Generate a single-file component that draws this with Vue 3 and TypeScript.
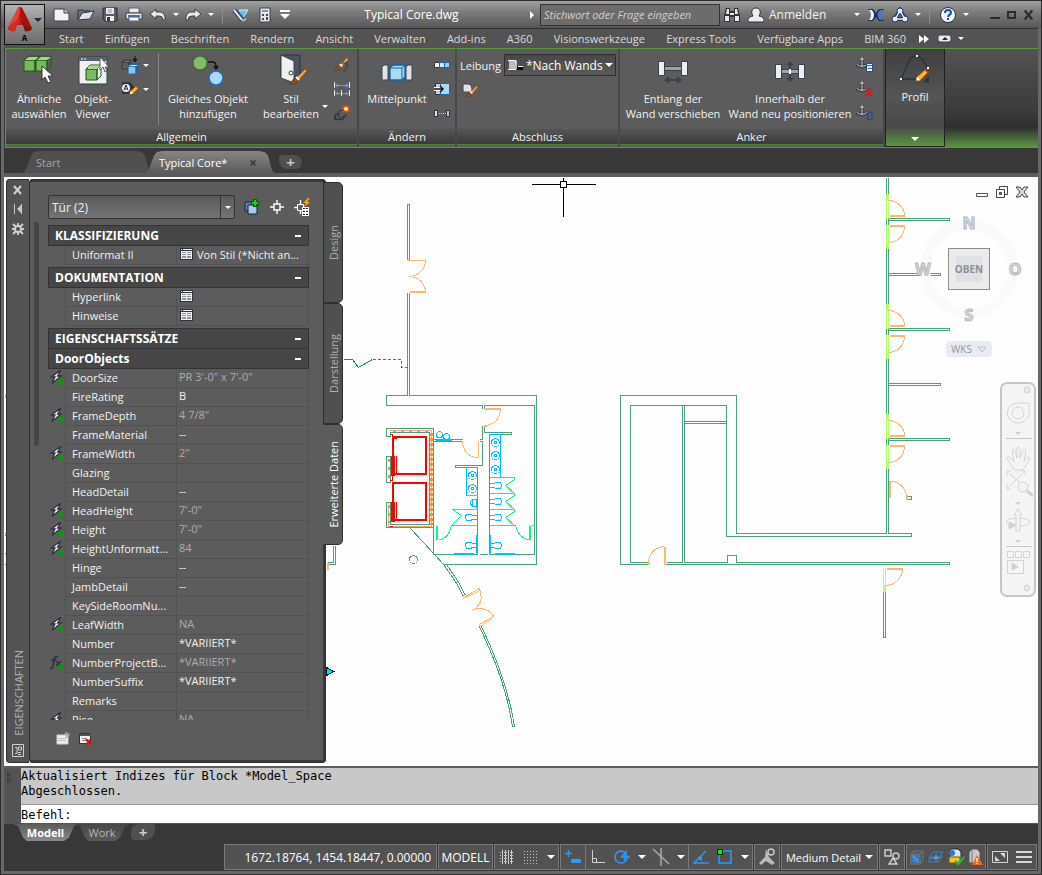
<script setup lang="ts">
import { h, ref } from 'vue'

type Icon = [number, number, string]

const cube = (x: number, y: number, s: number, d: number, top: string, front: string, line: string) =>
  `<path d="M${x} ${y + d}h${s}v${s}h-${s}z" fill="${front}" stroke="${line}"/><path d="M${x} ${y + d}l${d}-${d}h${s}v${s}l-${d} ${d}v-${s}l${d}-${d}M${x + s} ${y + d}h-${s}" fill="none" stroke="${line}"/><path d="M${x + 1} ${y + d}l${d}-${d - 1}h${s - 1}l-${d} ${d - 1}z" fill="${top}"/>`
const anchor =
  '<path d="M6 1v10M4 3h4M1 8c1 3 9 3 10 0M1 8v2M11 8v2" fill="none" stroke="#2f3540" stroke-width="3"/><path d="M6 1v10M4 3h4M1 8c1 3 9 3 10 0" fill="none" stroke="#d4d8df"/>'
const pencil =
  '<path d="M1 12l1-4 8-7 3 3-8 8z" fill="#ffb52e" stroke="#7c4a10"/><path d="M1 12l1-4 3 4z" fill="#fff"/><path d="M9 2l1-1 3 3-1 1z" fill="#a34a1c"/>'
const brush =
  '<path d="M16 1l-8 8 2 3 8-9z" fill="#f3a447" stroke="#8a4a14"/><path d="M8 8l3 3-2 2-3-3z" fill="#e8e8e8"/><path d="M6 10l3 3c0 3-5 4-9 3 3-1 3-5 6-6z" fill="#8d4c1c" stroke="#5c2f10" stroke-width=".6"/>'
const bolt = '<path d="M9.500 1L1.500 7h3.500l-3 6.500 9-7.500H7.500l3-5z" fill="#f4f5f7" stroke="#2d333e" stroke-width="1.3"/>'
const plus = '<path d="M11 8.500v6M8 11.500h6" stroke="#0b9a0b" stroke-width="2.4"/>'

const icons: Record<string, Icon> = {
  logo: [24, 26, '<path d="M10 1q2-2 4 0l10 20q-1 4-7 3l-2-6H9l-2 6q-6 1-7-3z" fill="#c01818"/><path d="M10 1q1-1 2-1 0 7-2 12l-6 6-4 3z" fill="#e2453a"/><path d="M14 1l10 20q-7-2-11-8l-1-13q1 0 2 1z" fill="#a81212"/><path d="M0 21q6-8 14-9l-5 6-2 6q-6 1-7-3z" fill="#cf2a24"/><path d="M13 13q4 6 11 8-1 4-7 3l-2-6z" fill="#8e0e0e"/>'],
  new: [18, 16, '<path d="M1 2h10l5 4v8H1z" fill="#f1f3f5" stroke="#3a3f47"/><path d="M11 2v4h5" fill="#c9ced6" stroke="#3a3f47"/>'],
  open: [18, 16, '<path d="M1 13V3h5l1 1h6v3" fill="#6c727c" stroke="#2f343c"/><path d="M1 13l4-7 12-2-4 8z" fill="#dfe2e8" stroke="#2f343c"/>'],
  save: [16, 16, '<path d="M1 1h14v13H3l-2-2z" fill="#56606e" stroke="#262b33"/><path d="M4 1h8v6H4z" fill="#e5e8ec"/><path d="M6 3h4M6 5h4" stroke="#8b93a0"/><path d="M4 9h8v5H4z" fill="#eef0f2"/><path d="M5 10h3v4H5z" fill="#333a45"/>'],
  print: [18, 16, '<path d="M4 1h10v5H4z" fill="#e9ecf0" stroke="#5a6069"/><path d="M1 6h16v6H1z" fill="#e8eaee" stroke="#3b414b"/><path d="M3 9h12" stroke="#3d75b8" stroke-width="2"/><path d="M4 10h10v4H4z" fill="#f7f8fa" stroke="#5a6069"/>'],
  undo: [18, 14, '<path d="M1 6l6-5v3h5q4 1 4 5v3h-2q0-4-4-4H7v3z" fill="#e6e9ee" stroke="#3a3f47"/>'],
  redo: [18, 14, '<path d="M17 6l-6-5v3H6q-4 1-4 5v3h2q0-4 4-4h3v3z" fill="#e6e9ee" stroke="#3a3f47"/>'],
  nav: [18, 16, '<path d="M7 3h9l-5 8z" fill="#5fc2ee" stroke="#dce9f3"/><path d="M2 3l9 11" stroke="#3a4350" stroke-width="4"/><path d="M2 3l8 10" stroke="#eef2f6" stroke-width="2"/><path d="M5 3l8 10" stroke="#2e5f93" stroke-width="1.5"/><path d="M10 14l4-2" stroke="#9fb6cc" stroke-width="2"/>'],
  sheet: [12, 16, '<path d="M1 1h10v14H1z" fill="#e4e7eb" stroke="#3c424c"/><path d="M3 3h6v2H3z" fill="#8b93a0"/><path d="M3 7h2v2H3zM7 7h2v2H7zM3 11h2v2H3zM7 10h2v3H7z" fill="#3f4752"/>'],
  cust: [10, 10, '<path d="M0 1h10" stroke="#fff" stroke-width="2"/><path d="M0 4h10L5 9z" fill="#fff"/>'],
  bino: [16, 16, '<path d="M2 1h4v3h4V1h4l2 8v6h-6v-5H6v5H0V9z" fill="#2d323b"/><path d="M3 2h2v5H2zM11 2h2l1 5h-3zM1 9h4v5H1zM11 9h4v5h-4zM6 6h4v2H6z" fill="#e6e9ee"/>'],
  user: [16, 16, '<path d="M8 1c5 0 5 5 3 8 4 1 5 2 5 6H0c0-4 1-5 5-6-2-3-2-8 3-8z" fill="#eceef1" stroke="#262b33"/>'],
  exch: [16, 14, '<path d="M0 1h5l3 4 3-4h5l-5 6 5 6h-5l-3-4-3 4H0l5-6z" fill="#1c2d59"/><path d="M1 2h3q4 5 0 10H1q4-5 0-10z" fill="#eef1f6"/><path d="M15 2h-3q-5 5 0 10h3q-4-5 0-10z" fill="#4f76c4"/>'],
  a360: [18, 16, '<path d="M9 3l5 9H4z" fill="none" stroke="#1f3566" stroke-width="4"/><g fill="#e8edf6" stroke="#22396b"><circle cx="9" cy="4" r="3"/><circle cx="4" cy="12" r="3"/><circle cx="14" cy="12" r="3"/></g><path d="M5 12h8M8 5l-3 6M10 5l3 6" stroke="#e8edf6" stroke-width="1.4"/>'],
  help: [18, 18, '<circle cx="9" cy="9" r="7.500" fill="#f4f6f8" stroke="#2b3038"/><path d="M6 7q0-3 3-3t3 3q0 1-2 2l-1 2" fill="none" stroke="#1748a8" stroke-width="2"/><path d="M8 12h2v2H8z" fill="#1748a8"/>'],
  min: [12, 12, '<path d="M1 9h10" stroke="#2b2b2b" stroke-width="2"/>'],
  max: [10, 12, '<path d="M1 3h7v6H1z" fill="none" stroke="#2b2b2b" stroke-width="2"/>'],
  close: [12, 12, '<path d="M2 2l7 8M9 2l-7 8" stroke="#2b2b2b" stroke-width="2"/><path d="M1 2h3M7 2h3M1 10h3M7 10h3" stroke="#2b2b2b"/>'],
  fwd: [10, 8, '<path d="M0 0l5 4-5 4zM5 0l5 4-5 4z" fill="#fff"/>'],
  panelUp: [14, 9, '<rect x="0" y="1" width="13" height="7" rx="2" fill="#e7e9ec" stroke="#3a3f47"/><path d="M4 6l3-3 3 3z" fill="#23272e"/>'],
  similar: [32, 34, cube(1, 3, 11, 4, '#a8d68f', '#79b65d', '#1e5c13') + cube(13, 3, 11, 4, '#a8d68f', '#79b65d', '#1e5c13') + '<path d="M19 13v14l3-3 3 6 3-1-3-6h5z" fill="#fff" stroke="#333"/>'],
  viewer: [32, 34, '<path d="M2 4h28v27H2z" fill="#eef0f4" stroke="#343a45"/><path d="M2 4h28v4H2z" fill="#59616f"/><path d="M4 6h2M7 6h2" stroke="#fff"/>' + cube(9, 12, 11, 4, '#a8d68f', '#7fb868', '#1e5c13') + '<path d="M23 4v13l3-3 2 5 2-1-2-4h4z" fill="#fff" stroke="#555"/>'],
  dup: [18, 18, cube(1, 4, 7, 2, '#777', '#5e5e5e', '#30353e') + cube(7, 8, 8, 2, '#d3ecff', '#8cc8ee', '#1463b0') + '<path d="M14 0v4M12 3h4l-2 3z" stroke="#15181d" fill="#15181d"/>'],
  tag: [18, 18, '<path d="M1 2h8l5 6-5 6H1z" fill="#30353e"/><circle cx="5" cy="8" r="4" fill="#f4f4f4"/><path d="M3 10l2-5 2 5M4 9h2" stroke="#222" fill="none"/><g transform="translate(8 5) scale(.75)">' + pencil + '</g>'],
  addSel: [34, 34, '<circle cx="9" cy="10" r="7" fill="#86bb6d" stroke="#2b6a1d"/><path d="M17 9h5q3 0 3 5" stroke="#111" fill="none" stroke-width="1.5"/><path d="M22 13h6l-3 4z" fill="#111"/><circle cx="25" cy="25" r="7" fill="#abd9f4" stroke="#1d6fb8" stroke-width="1.5"/>'],
  style: [32, 34, '<path d="M6 2h19v22H6z" fill="#4b5363" stroke="#2b303a"/><path d="M6 2l13 6v22L6 25z" fill="#eef0f3" stroke="#3a404b"/><circle cx="16" cy="20" r="2" fill="#fff" stroke="#333"/><g transform="translate(14 15)">' + brush + '</g>'],
  brushS: [18, 18, '<g transform="translate(1 1) scale(.8)">' + brush + '</g><path d="M16 7l-7 8 3 1 4-6z" fill="#4a4f57"/><path d="M9 7h5v3" stroke="#3a3f47" fill="none"/>'],
  dims: [18, 18, '<path d="M1.500 2v6M16.500 2v6M1.500 10v6M8.500 10v6M16.500 10v6" stroke="#e8e8e8"/><path d="M2 5.500h14M2 13.500h6M9 13.500h7" stroke="#6a9be8"/><path d="M2 5.500l3-2v4zM16 5.500l-3-2v4zM3 13.500l2-2v4zM15 13.500l-2-2v4z" fill="#6a9be8"/>'],
  star: [18, 18, '<path d="M2 16v-5q2 0 4-2M2 15q9 2 9-3" fill="none" stroke="#30353e" stroke-width="1.6"/><circle cx="9" cy="10" r="4" fill="none" stroke="#30353e"/><path d="M13 1v8M9 5h8M10 2l6 6M16 2l-6 6" stroke="#f0502a" stroke-width="1.5"/><circle cx="13" cy="5" r="2" fill="#fff45e"/>'],
  center: [34, 34, '<path d="M2 14l2-2h4v15H2zM26 14l2-2h4v15h-6z" fill="#dfe2e9" stroke="#3b424e"/><path d="M10 15l3-3h12v12l-3 3H10z" fill="#a9daf2" stroke="#0f66ab" stroke-width="1.4"/><path d="M10 15h12v12M22 15l3-3" stroke="#0f66ab" fill="none"/>'],
  row3: [18, 18, '<path d="M1.500 6.500h5v5h-5z" fill="#fff" stroke="#30353e"/><path d="M6.500 6.500h5v5h-5z" fill="#cde9fa" stroke="#1767b0"/><path d="M11.500 6.500h5v5h-5z" fill="#9bd2f2" stroke="#1767b0"/>'],
  insert: [18, 18, '<path d="M2.500 3.500h5v11h-5z" fill="#ccd0d6" stroke="#30353e"/><path d="M7.500 3.500h9v11h-9z" fill="#a9daf2" stroke="#1767b0"/><path d="M1 9h9" stroke="#fff" stroke-width="4"/><path d="M1 9h9M7 6l3 3-3 3" stroke="#111" stroke-width="1.5" fill="none"/>'],
  dots: [18, 18, '<path d="M1.500 6.500h3v6h-3z" fill="#e4e7eb" stroke="#30353e"/><path d="M13.500 6.500h3v6h-3z" fill="#a9d0ee" stroke="#30353e"/><path d="M6 9.500h7" stroke="#ccc" stroke-dasharray="1 1"/>'],
  leib: [16, 12, '<path d="M1 2h7l1 1v7H1z" fill="#b9bcc2"/><path d="M0 1.500h8v3M0 10.500h8" stroke="#fff" fill="none"/><path d="M9 7h6v4H9z" fill="#0b0b0b"/><path d="M10 7.500h5" stroke="#fff"/>'],
  edge: [18, 18, '<path d="M2 3h6q3 1 3 5v3H2z" fill="#dfe1e6" stroke="#444"/><g transform="translate(4 4) scale(.72)">' + brush + '</g>'],
  along: [34, 34, '<path d="M2.500 8.500h6v14h-6zM25.500 8.500h6v14h-6z" fill="#eceef1" stroke="#3a404b"/><path d="M8.500 13.500h17v4h-17z" fill="#9aa1ac" stroke="#3a404b"/><path d="M10 27h14" stroke="#3a404b" stroke-width="2"/><path d="M13 23v8l-5-4zM21 23v8l5-4z" fill="#3a404b"/>'],
  within: [34, 34, '<path d="M2.500 11.500h6v14h-6zM25.500 11.500h6v14h-6z" fill="#eceef1" stroke="#3a404b"/><path d="M8.500 16.500h17v4h-17z" fill="#9ea5b0" stroke="#3a404b"/><path d="M17 10v6M17 21v6" stroke="#3a404b" stroke-width="2"/><path d="M13 12h8l-4-4zM13 25h8l-4 4z" fill="#3a404b"/><path d="M17 16v5" stroke="#fff" stroke-width="2"/>'],
  anc1: [18, 18, anchor + '<path d="M10.500 7.500h6v8h-6z" fill="#e9eef4" stroke="#2c4b77"/><path d="M11 9.500h5M12 12.500h4" stroke="#2f67b0"/>'],
  anc2: [18, 18, anchor + '<path d="M10 9l6 7M16 9l-6 7" stroke="#e01818" stroke-width="2"/>'],
  anc3: [18, 18, anchor + '<rect x="12" y="8" width="4" height="8" rx="2" fill="none" stroke="#2b4c82" stroke-width="1.6"/>'],
  profil: [34, 32, '<path d="M3 26L11 8q3-5 7-5 7 1 11 12" fill="none" stroke="#2c323d" stroke-width="1.6"/><path d="M3 26h17" stroke="#2c323d" stroke-width="1.6"/><path d="M2 25h2v2H2zM18 2h2v2h-2zM29 14h2v2h-2z" fill="#fff"/><path d="M25 29l6 1v-7z" fill="#2c323d"/><g transform="translate(17 15) scale(1.05)">' + pencil + '</g>'],
  pclose: [10, 10, '<path d="M1 1l7 8M8 1L1 9" stroke="#d0d0d0" stroke-width="2"/>'],
  ppin: [10, 12, '<path d="M1.500 1v10M8.500 1v10" stroke="#c8c8c8"/><path d="M4 6l4-4v8z" fill="#c8c8c8"/>'],
  pgear: [12, 12, '<circle cx="6" cy="6" r="3" fill="none" stroke="#d0d0d0" stroke-width="1.8"/><path d="M6 0v3M6 9v3M0 6h3M9 6h3M1 1l3 3M11 1L8 4M1 11l3-3M11 11L8 8" stroke="#d0d0d0" stroke-width="1.8"/>'],
  pinfo: [12, 14, '<path d="M.5.5h11v12H.5z" fill="none" stroke="#d0d0d0"/><path d="M3 3.500h2v6H3M6.500 3v3h3V3zM6 8.500h3M6 10.500h3" fill="none" stroke="#d0d0d0"/>'],
  quick: [18, 18, '<path d="M2 4h8v9H2z" fill="#5d84b6" stroke="#10213d"/><path d="M5 7h9v9H5z" fill="#a8c9e8" stroke="#10213d"/><path d="M12 1v8M8 5h8" stroke="#0a560c" stroke-width="4"/><path d="M12 2v6M9 5h6" stroke="#19cf20" stroke-width="2"/>'],
  pick: [16, 16, '<path d="M8 1v4M8 11v4M1 8h4M11 8h4" stroke="#fff" stroke-width="1.4"/><path d="M5 5h6v6H5z" fill="none" stroke="#fff" stroke-width="1.4"/>'],
  qsel: [18, 18, '<path d="M7.500 2v4M7.500 13v3M1 9.500h3M10 9.500h2" stroke="#fff" stroke-width="1.4"/><path d="M4.500 6.500h6v6h-6z" fill="none" stroke="#fff"/><path d="M15 0l-5 5h3l-2 4 6-5h-3l3-4z" fill="#ffa51e"/><path d="M9 9h7v9H9z" fill="#fff"/><path d="M10 10.500h2M13 10.500h2M10 13.500h2M13 13.500h2M10 16.500h2M13 16.500h2" stroke="#222"/>'],
  sheetlet: [13, 12, '<path d="M0 0h13v12H0z" fill="#2c313a"/><path d="M1 3h11v8H1zM1 1h1v1H1zM3 1h9v1H3z" fill="#f0f1f4"/><path d="M2 4h4v1H2zM7 4h4v1H7zM2 6h4v1H2zM7 6h4v1H7zM2 8h4v2H2zM7 8h4v2H7z" fill="#8b93a0"/>'],
  bolt: [15, 16, bolt + plus],
  fx: [15, 16, '<path d="M8 2Q5 0 4 5L3 11Q2 14 0 13M1 5h5M6 6l5 5M11 6l-5 5" fill="none" stroke="#2d333e" stroke-width="1.6"/>' + plus],
  addSet: [14, 14, '<path d="M1 3h11v9H1z" fill="#f1f1f1" stroke="#ccc"/><path d="M2 6.500h8M2 8.500h8" stroke="#bbb"/><path d="M10.500 0v6M8 2.500h6" stroke="#aaa" stroke-width="1.6"/>'],
  delSet: [14, 14, '<path d="M.5 1.500h11v10H.5z" fill="#eceef1" stroke="#30353e"/><path d="M1 3h11" stroke="#4c5563" stroke-width="2"/><path d="M3 6.500h4M3 8.500h4" stroke="#888"/><path d="M7 7l5 6M12 7l-5 6" stroke="#d51414" stroke-width="2"/>'],
  grid: [16, 16, '<path d="M3.500 1v14M6.500 1v14M9.500 1v14M12.500 1v14" stroke="#d0d0d0"/><path d="M1 3.500h14M1 6.500h14M1 9.500h14M1 12.500h14" stroke="#c4c4c4" stroke-dasharray="1 1"/>'],
  snap: [16, 16, '<path d="M1 2.500h14M1 5.500h14M1 8.500h14M1 11.500h14M1 14.500h14" stroke="#c4c4c4" stroke-dasharray="1 2"/>'],
  dyn: [18, 16, '<path d="M4.500 1v7M1 4.500h7" stroke="#2f98ff" stroke-width="1.4"/><rect x="7" y="10" width="10" height="4" rx="1" fill="#2f98ff"/>'],
  ortho: [16, 16, '<path d="M2.500 1v12.500H15M2.500 9.500h4v4" fill="none" stroke="#d0d0d0"/>'],
  polar: [18, 16, '<circle cx="8" cy="8" r="6" fill="none" stroke="#2f98ff" stroke-width="1.6"/><path d="M8 8h9M8 8l6-6M11 5q2 3 0 6" fill="none" stroke="#2f98ff" stroke-width="1.4"/>'],
  iso: [18, 18, '<path d="M1 1l16 15M9 0v18" stroke="#a9a9a9" stroke-width="1.5"/>'],
  otrack: [18, 16, '<path d="M1 14h16M2 14L14 2" stroke="#2f98ff" stroke-width="1.5"/><path d="M5 9l5-2v5z" fill="#2f98ff"/>'],
  osnap: [18, 18, '<path d="M3 3h12v12H3z" fill="none" stroke="#2f98ff" stroke-width="1.5"/><path d="M1.500 1.500h5v5h-5z" fill="#18e018" stroke="#052d05"/>'],
  anno: [18, 18, '<path d="M8 1l3 8 6 6-3 2-6-4-5 4-2-2 6-6z" fill="#bababa"/><circle cx="13" cy="4" r="3" fill="#535353" stroke="#c9c9c9" stroke-width="1.5"/>'],
  isol: [18, 18, '<path d="M2 2h6v6H2zM6 16l4-6 4 6z" fill="none" stroke="#cfcfcf" stroke-width="1.4"/><circle cx="13" cy="8" r="3" fill="none" stroke="#cfcfcf" stroke-width="1.4"/>'],
  hw: [16, 16, '<path d="M2 5h9v10H2zM2 5l3-3h9v9l-3 4M11 5l3-3" fill="none" stroke="#7a7a7a"/><path d="M3 8l6 6M3 6l7 7M5 6l5 5M3 11l3 3M8 6l2 2" stroke="#2f98ff" stroke-width="1.2"/>'],
  layers: [18, 16, '<path d="M2 9l4-6h10l-4 6zM1 13l4-5h10l-4 5z" fill="none" stroke="#3487d8"/><path d="M9 5v7M6 9h6" stroke="#6fb2ee"/>'],
  dwg: [18, 18, '<path d="M3 1h8l3 3v7H3z" fill="#dce6f4" stroke="#223"/><circle cx="5" cy="5" r="3" fill="#3473c9"/><path d="M2 9h11v6H2z" fill="#f4c726" stroke="#6d5a0c"/><path d="M8 13l3 3 6-7" fill="none" stroke="#2eb32e" stroke-width="2.4"/>'],
  clip: [16, 18, '<path d="M2 4l3-3h5l3 3v11H2z" fill="#c9c9c9" stroke="#555"/><path d="M5 2v13" stroke="#777"/><path d="M10 7l6 10H5z" fill="#ee6a1a"/><path d="M10 10v4M10 15v1" stroke="#fff" stroke-width="1.4"/>'],
  full: [18, 14, '<path d="M1.500 1.500h15v11h-15z" fill="none" stroke="#d8d8d8"/><path d="M4 11V6l5 5zM14 3v5L9 3z" fill="#d8d8d8"/>'],
  menu: [16, 14, '<path d="M0 2h16M0 7h16M0 12h16" stroke="#d8d8d8" stroke-width="2"/>'],
  dmin: [14, 12, '<path d="M1.500 7.500h11v3h-11z" fill="#fff" stroke="#555"/>'],
  dmax: [14, 14, '<path d="M4.500 4.500v-3h8v8h-3" fill="#fff" stroke="#444"/><path d="M1.500 4.500h8v8h-8z" fill="#fff" stroke="#444"/><path d="M4.500 7.500h2v2h-2z" fill="#777" stroke="#444"/>'],
  dclose: [14, 12, '<path d="M1 1h4l2 3 2-3h4l-4 5 4 5H9L7 8l-2 3H1l4-5z" fill="#ddd" stroke="#444"/>'],
  navbar: [30, 209, '<g fill="none" stroke="#d2d2d2"><circle cx="24" cy="5" r="3" fill="#e8e8e8"/><path d="M15 18h11v12a11 10 0 1 1-11-12z"/><circle cx="15" cy="28" r="6"/><path d="M3 53.500h26M3 161.500h26" stroke="#c6c6c6"/><path d="M8 80q-5-7-3-8 3 0 6 5l-2-12q2-2 3 1l2 7v-10q2-2 3 0v10l3-8q2-1 3 1l-2 10 4-4q3 0 1 3l-6 10h-9z"/><path d="M6 88l16 14M20 88L6 102M4 86h4M4 86v4M22 86h-4M22 86v4M4 104h4M4 104v-4"/><circle cx="20" cy="102" r="5" fill="#f4f4f4"/><path d="M24 106l6 5" stroke-width="3"/><ellipse cx="15" cy="137" rx="12" ry="4"/><path d="M13 146v-16h-2l4-6 4 6h-2v16z" fill="#f4f4f4"/><path d="M6 137v7l7-4z" fill="#d2d2d2"/><path d="M4.500 166.500h6v6h-6zM12.500 166.500h6v6h-6zM20.500 166.500h6v6h-6zM4.500 175.500h16v13h-16z"/><path d="M9 178v7l6-3z" fill="#d2d2d2"/><circle cx="24" cy="203" r="3" fill="#e8e8e8"/></g><path d="M12 47h6l-3 3zM12 117h6l-3 3zM12 155h6l-3 3z" fill="#cfcfcf"/>'],
}

const Ico = (p: { n: string }) => {
  const [w, ht, body] = icons[p.n]
  return h('svg', { width: w, height: ht, viewBox: `0 0 ${w} ${ht}`, innerHTML: body, 'aria-hidden': 'true' })
}
Ico.props = ['n']

const quickAccess = ['new', 'open', 'save', 'print', 'undo', '|s', 'redo', '|s', '|', 'nav', 'sheet', 'cust']
const menu = ['Start', 'Einfügen', 'Beschriften', 'Rendern', 'Ansicht', 'Verwalten', 'Add-ins', 'A360', 'Visionswerkzeuge', 'Express Tools', 'Verfügbare Apps', 'BIM 360']

interface Row { name: string; value?: string; icon?: string; list?: boolean; muted?: boolean }
const a = (name: string, value: string, icon = 'bolt'): Row => ({ name, value, icon, muted: true })
const sections: { title: string; joined?: boolean; rows: Row[] }[] = [
  { title: 'KLASSIFIZIERUNG', rows: [{ name: 'Uniformat II', value: 'Von Stil (*Nicht an...', list: true }] },
  { title: 'DOKUMENTATION', rows: [{ name: 'Hyperlink', list: true }, { name: 'Hinweise', list: true }] },
  { title: 'EIGENSCHAFTSSÄTZE', joined: true, rows: [] },
  {
    title: 'DoorObjects',
    rows: [
      a('DoorSize', 'PR 3\'-0" x 7\'-0"'), { name: 'FireRating', value: 'B' }, a('FrameDepth', '4 7/8"'),
      { name: 'FrameMaterial', value: '--' }, a('FrameWidth', '2"'), { name: 'Glazing' },
      { name: 'HeadDetail', value: '--' }, a('HeadHeight', '7\'-0"'), a('Height', '7\'-0"'),
      a('HeightUnformatt...', '84'), { name: 'Hinge', value: '--' }, { name: 'JambDetail', value: '--' },
      { name: 'KeySideRoomNu...' }, a('LeafWidth', 'NA'), { name: 'Number', value: '*VARIIERT*' },
      a('NumberProjectB...', '*VARIIERT*', 'fx'), { name: 'NumberSuffix', value: '*VARIIERT*' },
      { name: 'Remarks' }, a('Rise', 'NA'),
    ],
  },
]
const sideTabs = ['Design', 'Darstellung', 'Erweiterte Daten']
const activeSide = ref('Erweiterte Daten')
const status: string[][] = [['dyn'], ['ortho', 'polar', '|s', 'iso', '|s'], ['otrack', 'osnap', '|s']]
const doorPairs = [0, 110, 220]
const stubs = [[218, 949], [273, 940], [328, 949], [383, 940], [438, 949]]
</script>

<template>
  <div class="window">
    <header class="titlebar">
      <button class="app" aria-label="Anwendungsmenü"><Ico n="logo" /><i class="ar dark"></i><b>A</b></button>
      <template v-for="(q, i) in quickAccess" :key="i">
        <i v-if="q === '|'" class="vsep"></i>
        <button v-else-if="q === '|s'" class="drop" aria-label="Mehr"><i class="ar"></i></button>
        <button v-else class="tb" :class="{ slim: q === 'cust' }" :aria-label="q"><Ico :n="q" /></button>
      </template>
      <div class="doc">Typical Core.dwg</div>
      <i class="play"></i>
      <input class="search" type="text" placeholder="Stichwort oder Frage eingeben" aria-label="Suche" />
      <button class="tb" aria-label="Suchen"><Ico n="bino" /></button>
      <button class="login"><Ico n="user" /><span>Anmelden</span><i class="ar"></i></button>
      <button class="tb" aria-label="Exchange"><Ico n="exch" /></button>
      <button class="tb" aria-label="A360"><Ico n="a360" /></button>
      <button class="drop" aria-label="Mehr"><i class="ar"></i></button>
      <i class="vsep"></i>
      <button class="tb" aria-label="Hilfe"><Ico n="help" /></button>
      <button class="drop" aria-label="Mehr"><i class="ar"></i></button>
      <div class="winbtns">
        <button aria-label="Minimieren"><Ico n="min" /></button>
        <button aria-label="Maximieren"><Ico n="max" /></button>
        <button aria-label="Schließen"><Ico n="close" /></button>
      </div>
    </header>

    <div class="body">
      <div class="menurow">
        <nav class="menu"><a v-for="m in menu" :key="m" href="#">{{ m }}</a></nav>
        <button class="bare" aria-label="Weitere Register"><Ico n="fwd" /></button>
        <button class="bare up" aria-label="Minimieren"><Ico n="panelUp" /><i class="ar"></i></button>
      </div>

      <div class="ribbon">
        <section class="panel allgemein">
          <div class="tools">
            <button class="big w62"><Ico n="similar" /><span>Ähnliche<br />auswählen</span></button>
            <button class="big w46"><Ico n="viewer" /><span>Objekt-<br />Viewer</span></button>
            <div class="small wide">
              <button aria-label="Duplizieren"><Ico n="dup" /><i class="ar"></i></button>
              <button aria-label="Beschriften"><Ico n="tag" /><i class="ar"></i></button>
            </div>
            <i class="tsep"></i>
            <button class="big w90"><Ico n="addSel" /><span>Gleiches Objekt<br />hinzufügen</span></button>
            <button class="big w76"><Ico n="style" /><span>Stil<br />bearbeiten</span></button>
            <button class="stildrop" aria-label="Stile"><i class="ar"></i></button>
            <div class="small">
              <button aria-label="Eigenschaften anpassen"><Ico n="brushS" /></button>
              <button aria-label="Bemaßung"><Ico n="dims" /></button>
              <button aria-label="Neu"><Ico n="star" /></button>
            </div>
          </div>
          <h2>Allgemein</h2>
        </section>
        <section class="panel aendern">
          <div class="tools">
            <button class="big w72"><Ico n="center" /><span>Mittelpunkt</span></button>
            <div class="small">
              <button aria-label="Reihe"><Ico n="row3" /></button>
              <button aria-label="Einfügen"><Ico n="insert" /></button>
              <button aria-label="Abstand"><Ico n="dots" /></button>
            </div>
          </div>
          <h2>Ändern</h2>
        </section>
        <section class="panel abschluss">
          <div class="leibung">
            <label for="leibung">Leibung</label>
            <div class="combo">
              <Ico n="leib" />
              <select id="leibung"><option>*Nach Wandstil</option></select>
              <i class="ar lg"></i>
            </div>
          </div>
          <button class="edge" aria-label="Kante bearbeiten"><Ico n="edge" /></button>
          <h2>Abschluss</h2>
        </section>
        <section class="panel anker">
          <div class="tools">
            <button class="big w104"><Ico n="along" /><span>Entlang der<br />Wand verschieben</span></button>
            <button class="big w132"><Ico n="within" /><span>Innerhalb der<br />Wand neu positionieren</span></button>
            <div class="small">
              <button aria-label="Anker setzen"><Ico n="anc1" /></button>
              <button aria-label="Anker lösen"><Ico n="anc2" /></button>
              <button aria-label="Anker verbinden"><Ico n="anc3" /></button>
            </div>
          </div>
          <h2>Anker</h2>
        </section>
        <button class="profil"><Ico n="profil" /><span>Profil</span><i class="ar lg"></i></button>
      </div>

      <div class="files">
        <button class="file">Start</button>
        <button class="file on">Typical Core* <b>×</b></button>
        <button class="add" aria-label="Neue Zeichnung">+</button>
      </div>

      <main class="canvas">
        <svg class="plan" viewBox="4 177 1034 589" preserveAspectRatio="xMinYMin slice" shape-rendering="crispEdges">
          <g transform="translate(.5 .5)" fill="none" stroke="#4aa27a">
            <path d="M407 259V204H409V259M407 292V395H386V405H482V408M409 292V395H536V564H443M484 408V405H534V554H489M487 554H479M477 554H434M482 425V439H479M479 441H482V465H455V467H477V554M484 425V432H511V434H489V554M433 439H462M433 441H462M433 428V554" />
            <path d="M386 456H390V482H386Z" />
            <path d="M410 528L434 554L443 564L455 581L463 596M443 564L446 564L457 580L465 595" />
            <path d="M479 626C490 650 506 685 512 726H514C508 687 492 649 481 626" />
            <circle cx="413" cy="559" r="4" />
            <path d="M647 564H620V395H736V533H886M726 405V536H911V533H888M647 562H630V405H726M682 405V562H666M684 405V562H727V555H736V562H949V564H665M684 421H726M684 423H726" />
            <path d="M886 177V533M888 177V533M883 567V637H885V567M905 496H911V499H907" />
            <path v-for="s in stubs" :key="s[0]" :d="`M888 ${s[0]}H${s[1]}V${s[0] + 2}H888`" />
            <path d="M4 395H6M4 397H6M4 533H6M4 535H6M4 553H6M4 564H6M333 545V562H327M335 545V564H327" />
            <path stroke="#009c50" d="M343 359H352L358 367L372 359" />
            <path stroke="#009c50" stroke-dasharray="3 2" d="M372 359H401V367H407" />
            <g stroke="#b4ff6e">
              <g v-for="d in doorPairs" :key="d">
                <path stroke-width="3" :d="`M887 ${193 + d}V${200 + d}M887 ${241 + d}V${248 + d}`" />
                <path :d="`M886 ${200 + d}V${218 + d}M888 ${200 + d}V${218 + d}M886 ${224 + d}V${241 + d}M888 ${224 + d}V${241 + d}`" />
              </g>
              <path stroke-width="3" d="M884 584V591" />
              <path d="M883 567V584M885 567V584" />
            </g>
            <g stroke="#ffb873">
              <g v-for="d in doorPairs" :key="d">
                <path :d="`M888 ${200 + d}A16 16 0 0 1 904 ${215 + d}M904 ${226 + d}A16 16 0 0 1 888 ${242 + d}`" />
                <path stroke-width="2" :d="`M889 ${215 + d}H904M889 ${225 + d}H904`" />
              </g>
              <path stroke-width="2" d="M889 480V497M906 494V499M886 568H902M664 546V564M648 561V564M409 291H425M483 408H500M483 425H486M327 562V569" />
              <path d="M891 481A16 16 0 0 1 906 496M902 569A17 17 0 0 1 885 585M664 546C653 547 648 554 648 564M408 258V260H425A17 16 0 0 1 409 276A17 16 0 0 1 425 291M500 409C499 419 493 425 483 425M478 440V457C467 457 462 449 462 440" />
              <path d="M463 597L479 588M465 597L480 590M479 588C482 598 481 602 475 608L472 610M475 608C484 607 491 611 493 616L479 624M492 618L480 626" />
            </g>
            <g stroke="#ff9226">
              <path stroke="#f5a99a" d="M388 430H431V526H388V504" />
              <path stroke-dasharray="3 5" stroke-width="2" d="M392 431H427M388 458V481M388 504V522" />
              <path stroke-dasharray="2 2" stroke-width="2" d="M390 526H429" />
              <path stroke-dasharray="3 2" stroke-width="3" d="M431 432V524" />
            </g>
            <path d="M386 428H433V527H386V502H390V524H429V432H390V436H386Z" />
            <g stroke="red" transform="translate(-.5 -.5)">
              <path stroke-width="2" d="M393 437H426V474H393ZM393 483H426V520H393Z" />
              <path stroke-width="4" d="M393 456V476M393 502V522" />
              <path d="M390.500 434.500H392.500V480M390 480.500H393M390 526.500H393M396.500 456V474M396.500 502V520M394 438.500H397" />
            </g>
            <g stroke="#00bfff">
              <path d="M489 434H500V477M477 467H466V495H477" />
              <circle v-for="y in [442, 455, 469]" :key="y" cx="495" :cy="y" r="4" /><circle v-for="y in [442, 455, 469]" :key="'i' + y" cx="495" :cy="y" r="1" />
              <circle v-for="y in [475, 488]" :key="y" cx="472" :cy="y" r="4" /><circle v-for="y in [475, 488]" :key="'i' + y" cx="472" :cy="y" r="1" />
              <circle cx="439" cy="434" r="3" /><circle cx="446" cy="436" r="3" />
              <path stroke-width="2" d="M435 439H451M476 534V552M489 534V552M453 553H473M494 553H514M476 498V507" />
              <path d="M476 499C468 498 468 506 476 506M472 499V506" />
              <path v-for="y in [485, 501, 517, 545]" :key="y" :d="`M489 ${y - 2}H494C498 ${y - 5} 501 ${y - 3} 501 ${y}C501 ${y + 3} 498 ${y + 5} 494 ${y + 2}H489`" />
              <path v-for="y in [517, 545]" :key="'l' + y" :d="`M477 ${y - 2}H472C468 ${y - 5} 465 ${y - 3} 465 ${y}C465 ${y + 3} 468 ${y + 5} 472 ${y + 2}H477`" />
            </g>
            <g stroke="#00ff7f">
              <path d="M489 477H514V479L505 485L514 493H489M514 493V495L505 501L514 509H489M514 509V511L505 517L514 525H489M466 495H477M477 509H452L461 515L451 525H477M531 525H534M515 525C517 534 523 539 529 539M451 525C449 534 444 539 438 539" />
              <path stroke-width="2" d="M436 525V539M529 525V539" />
            </g>
            <path fill="#00d8ff" stroke="#123" d="M326 667L333 671L326 675Z" />
            <g stroke="#000"><path d="M531 184H595M563 177V216" /><path fill="#fff" d="M560 181H566V187H560Z" /></g>
          </g>
        </svg>

        <div class="mdi">
          <button aria-label="Minimieren"><Ico n="dmin" /></button>
          <button aria-label="Wiederherstellen"><Ico n="dmax" /></button>
          <button aria-label="Schließen"><Ico n="dclose" /></button>
        </div>

        <div class="viewcube">
          <div class="compass">
            <i class="ring"></i>
            <button class="n">N</button><button class="w">W</button>
            <button class="top">OBEN</button>
            <button class="o">O</button><button class="s">S</button>
          </div>
          <button class="wks">WKS <svg width="10" height="7" viewBox="0 0 10 7"><path d="M1 1h8l-4 5z" fill="none" stroke="#bbc" /></svg></button>
        </div>
        <div class="navbar" role="toolbar" aria-label="Navigation"><Ico n="navbar" /></div>

        <aside class="palette">
          <div class="strip">
            <button aria-label="Schließen"><Ico n="pclose" /></button>
            <button aria-label="Ausblenden"><Ico n="ppin" /></button>
            <button aria-label="Einstellungen"><Ico n="pgear" /></button>
            <span class="vtext">EIGENSCHAFTEN</span>
            <button aria-label="Info"><Ico n="pinfo" /></button>
          </div>
          <div class="props">
            <div class="picker">
              <div class="objsel">
                <select aria-label="Objekttyp"><option>Tür (2)</option></select>
                <span><i class="ar"></i></span>
              </div>
              <button aria-label="PICKADD"><Ico n="quick" /></button>
              <button aria-label="Objekte wählen"><Ico n="pick" /></button>
              <button aria-label="Schnellauswahl"><Ico n="qsel" /></button>
            </div>
            <div class="scroll">
              <div class="bar"><i></i></div>
              <div class="list">
                <table v-for="s in sections" :key="s.title" :class="{ joined: s.joined }">
                  <colgroup><col class="c1" /><col class="c2" /><col /></colgroup>
                  <thead><tr><th colspan="3"><div><span>{{ s.title }}</span><i></i></div></th></tr></thead>
                  <tbody>
                    <tr v-for="r in s.rows" :key="r.name">
                      <td class="ic"><Ico v-if="r.icon" :n="r.icon" /></td>
                      <td class="nm">{{ r.name }}</td>
                      <td class="vl" :class="{ muted: r.muted, list: r.list }"><Ico v-if="r.list" n="sheetlet" />{{ r.value }}</td>
                    </tr>
                  </tbody>
                </table>
              </div>
            </div>
            <div class="foot">
              <button aria-label="Hinzufügen"><Ico n="addSet" /></button>
              <button aria-label="Entfernen"><Ico n="delSet" /></button>
            </div>
          </div>
          <div class="sidetabs">
            <button v-for="t in sideTabs" :key="t" :class="{ on: t === activeSide }" @click="activeSide = t"><span class="vtext">{{ t }}</span></button>
          </div>
        </aside>
      </main>

      <section class="command">
        <div class="grip"></div>
        <div class="console">
          <pre>Aktualisiert Indizes für Block *Model_Space
Abgeschlossen.</pre>
          <div class="prompt"><label for="cmd">Befehl:</label><input id="cmd" type="text" /></div>
        </div>
      </section>

      <footer class="bottom">
        <div class="layouts">
          <button class="lay on">Modell</button><button class="lay">Work</button><button class="lay plus" aria-label="Neues Layout">+</button>
        </div>
        <div class="status">
          <div class="grp coords">1672.18764, 1454.18447, 0.00000</div>
          <button class="grp model">MODELL</button>
          <div class="grp">
            <button class="st" aria-label="Raster"><Ico n="grid" /></button>
            <button class="st" aria-label="Fang"><Ico n="snap" /></button>
            <button class="sd" aria-label="Mehr"><i class="ar lg"></i></button>
          </div>
          <div class="grp multi">
            <div v-for="(g, i) in status" :key="i" class="sub">
              <template v-for="(b, j) in g" :key="j">
                <button v-if="b === '|s'" class="sd" aria-label="Mehr"><i class="ar lg"></i></button>
                <button v-else class="st" :aria-label="b"><Ico :n="b" /></button>
              </template>
            </div>
          </div>
          <div class="grp"><button class="st" aria-label="Beschriftung"><Ico n="anno" /></button></div>
          <button class="grp detail">Medium Detail <i class="ar lg"></i></button>
          <div class="grp"><button class="st" aria-label="Isolieren"><Ico n="isol" /></button></div>
          <div class="grp tight">
            <button aria-label="Hardware"><Ico n="hw" /></button>
            <button aria-label="Ebenen"><Ico n="layers" /></button>
            <button aria-label="Dateien"><Ico n="dwg" /></button>
            <button aria-label="Warnung"><Ico n="clip" /></button>
          </div>
          <div class="grp">
            <button class="st" aria-label="Vollbild"><Ico n="full" /></button>
            <button class="st" aria-label="Anpassen"><Ico n="menu" /></button>
          </div>
        </div>
      </footer>
    </div>
  </div>
</template>

<style>
body { background: #383838; }
</style>

<style scoped>
* { box-sizing: border-box; }
.window { min-height: 100vh; display: flex; flex-direction: column; border: 1px solid #2c2c2c; background: #686868; color: #f2f2f2; font: 12px/15px "Open Sans", "Noto Sans", sans-serif; }
button, input, select { font: inherit; color: inherit; border: 0; padding: 0; margin: 0; background: none; border-radius: 0; }
button { display: flex; align-items: center; justify-content: center; cursor: pointer; white-space: nowrap; }
select { appearance: none; outline: none; }
svg { display: block; flex: none; }
a { color: inherit; text-decoration: none; }
.ar { flex: none; border: 3px solid transparent; border-top: 3px solid #fff; border-bottom: 0; }
.ar.lg { border-width: 4px 4px 0; }
.ar.dark { border-top-color: #1f2630; border-width: 4px 4px 0; }

.titlebar { position: relative; height: 27px; display: flex; align-items: center; padding: 0 4px 0 49px; background: linear-gradient(#a2a2a2, #7c7c7c 40%, #575757); }
.app { position: absolute; z-index: 3; left: 3px; top: 3px; width: 41px; height: 41px; display: grid; grid-template-columns: 24px 8px; column-gap: 2px; row-gap: 1px; align-content: center; background: linear-gradient(#b5b5b5, #8a8a8a 50%, #6d6d6d); border: 1px solid #111; color: #000; }
.app b { font-size: 8px; line-height: 8px; grid-column: 1 / 3; }
.tb { width: 24px; height: 24px; }
.tb.slim { width: 16px; }
.drop { width: 11px; height: 24px; }
.vsep { width: 1px; height: 18px; margin: 0 6px; background: #8d8d8d; }
.doc { flex: 1; text-align: center; color: #fff; }
.play { border: 4px solid transparent; border-left: 4px solid #fff; border-right: 0; margin: 0 6px 0 0; }
.search { width: 180px; height: 22px; padding: 0 3px; background: #6c6c6c; border: 1px solid #333; font-size: 11px; font-style: italic; color: #eee; }
.search::placeholder { color: #cfcfcf; opacity: 1; }
.login { width: 120px; height: 24px; padding: 0 4px; gap: 5px; justify-content: flex-start; }
.login .ar { margin-left: auto; }
.winbtns { display: flex; gap: 6px; margin: 0 2px 0 18px; }

.body { flex: 1; display: flex; flex-direction: column; margin: 0 3px 3px; background: #383838; border-top: 1px solid #2f2f2f; }
.menurow { height: 19px; display: flex; align-items: center; background: #535353; padding-left: 55px; gap: 13px; }
.menu { flex: 0 1 847px; display: flex; justify-content: space-between; color: #dcdcdc; font-size: 11px; }
.bare { gap: 6px; }
.bare.up { margin-left: -4px; }

.ribbon { height: 100px; display: flex; margin-left: 1px; border: 1px solid #5b9640; border-right: 0; background: linear-gradient(#535353, #3c3c3c 60%, #2f2f2f 80%, #5b9640); font-size: 11px; }
.panel { display: flex; flex-direction: column; flex: none; background: #5c5c5c; border-right: 2px solid #484848; box-shadow: inset 0 -2px #5c5c5c, inset 0 -3px #4d8038; }
.panel h2 { margin: auto 0 3px; height: 15px; font-size: 11px; line-height: 15px; font-weight: 400; text-align: center; background: linear-gradient(#565656, #3a3a3a); }
.allgemein { width: 353px; }
.aendern { width: 98px; }
.abschluss { width: 163px; }
.anker { width: 265px; }
.tools { display: flex; padding: 4px 0 0 2px; }
.big { flex-direction: column; justify-content: flex-start; height: 70px; gap: 4px; }
.w62 { width: 62px; }
.w46 { width: 46px; }
.w90 { width: 90px; }
.w72 { width: 72px; }
.w76 { width: 76px; }
.w104 { width: 102px; }
.w132 { width: 132px; }
.small { display: flex; flex-direction: column; gap: 6px; padding-top: 3px; width: 22px; }
.small button { gap: 4px; height: 18px; justify-content: flex-start; }
.small.wide { width: 42px; padding-left: 5px; }
.tsep { width: 1px; height: 72px; background: #858585; margin-right: 4px; }
.stildrop { align-self: flex-start; margin: 52px 5px 0 -7px; }
.leibung { display: flex; align-items: center; gap: 3px; padding: 5px 0 0 3px; }
.combo { width: 112px; height: 22px; display: flex; align-items: center; padding: 0 2px 0 3px; gap: 2px; background: linear-gradient(#484848, #5a5a5a); border: 1px solid #2e2e2e; }
.combo select { flex: 1; width: 0; overflow: hidden; text-overflow: clip; color: #fff; font-size: 12px; }
.edge { align-self: flex-start; margin: 5px 0 0 4px; }
.profil { width: 60px; flex-direction: column; justify-content: flex-start; padding-top: 4px; gap: 4px; border: 1px solid #222; border-top: 0; background: linear-gradient(#404040, #555 50%, #484848 80%, #5b9640); }
.profil .ar { margin: auto 0 5px; }

.files { height: 29px; display: flex; align-items: flex-end; padding-left: 18px; border-bottom: 4px solid #5c5c5c; font-size: 11px; }
.file { height: 22px; width: 130px; justify-content: space-between; padding: 0 18px 0 14px; color: #a5a5a5; background: #505050; clip-path: polygon(0 100%, 3px 92%, 9px 20%, 12px 5%, 18px 0, calc(100% - 16px) 0, calc(100% - 10px) 6%, calc(100% - 7px) 20%, calc(100% - 3px) 88%, 100% 100%); }
.file.on { margin-left: -7px; color: #fff; background: linear-gradient(#858585, #5c5c5c); }
.file b { font-size: 14px; color: #3c3c3c; }
.add { width: 23px; height: 14px; margin: 0 0 4px 4px; border-radius: 4px 10px 8px 10px; background: #505050; color: #c8c8c8; font-size: 15px; font-weight: 700; }

.canvas { position: relative; flex: 1; min-height: 420px; background: #fefefe; overflow: hidden; }
.plan { position: absolute; inset: 0; width: 100%; height: 100%; }
.mdi { position: absolute; right: 9px; top: 8px; display: flex; gap: 6px; }
.viewcube { position: absolute; right: 12px; top: 35px; display: flex; flex-direction: column; align-items: center; gap: 15px; }
.compass { position: relative; display: grid; grid-template: 22px 70px 22px / 22px 70px 22px; place-items: center; font-size: 16px; font-weight: 700; color: #dcdcdc; }
.compass button { position: relative; -webkit-text-stroke: 1px #b5b5b5; }
.ring { position: absolute; inset: 8px; border: 10px solid #fafafa; border-radius: 50%; }
.n { grid-area: 1 / 2; }
.w { grid-area: 2 / 1; }
.top { grid-area: 2 / 2; }
.o { grid-area: 2 / 3; }
.s { grid-area: 3 / 2; }
.compass .top { width: 42px; height: 42px; font-size: 10px; color: #8b9097; background: linear-gradient(#dfe1e5, #dfe1e5) center / 26px 26px no-repeat #ebebeb; border: 1px solid #8c8c8c; -webkit-text-stroke: 0; }
.wks { width: 46px; height: 16px; gap: 5px; border-radius: 4px; background: #e9ebf3; color: #94979d; font-size: 10px; }
.navbar { position: absolute; right: 2px; top: 205px; padding: 1px; border: 2px solid #c6c6c6; border-radius: 7px; background: #f5f5f5; }

.palette { position: absolute; left: 2px; top: 2px; bottom: 3px; display: flex; }
.strip { width: 23px; display: flex; flex-direction: column; align-items: center; gap: 8px; padding: 5px 0 4px; background: #535353; border: 1px solid #2e2e2e; border-right: 0; border-radius: 4px 0 0 4px; }
.vtext { writing-mode: vertical-rl; transform: rotate(180deg); color: #b0b0b0; font-size: 11px; white-space: nowrap; }
.strip .vtext { margin-top: auto; }
.props { width: 297px; display: flex; flex-direction: column; padding: 13px 12px 14px 4px; background: #5c5c5c; border: solid #3a3a3a; border-width: 3px 3px 3px 1px; border-radius: 4px; outline: 1px solid #2e2e2e; outline-offset: -1px; }
.picker { display: flex; align-items: center; gap: 8px; padding-left: 14px; }
.objsel { width: 189px; height: 24px; display: flex; background: linear-gradient(#5a5a5a, #747474); border: 1px solid #333; border-radius: 2px; }
.objsel select { flex: 1; padding: 0 3px; }
.objsel span { width: 14px; display: grid; place-items: center; border-left: 1px solid #333; }
.scroll { flex: 1; min-height: 0; display: flex; margin-top: 3px; }
.bar { width: 14px; flex: none; }
.bar i { display: block; width: 5px; height: 224px; border-radius: 3px; background: #454545; }
.list { flex: 1; min-width: 0; overflow: hidden; margin-top: 3px; }
table { width: 261px; table-layout: fixed; border-collapse: collapse; margin-bottom: 2px; }
table.joined { margin-bottom: -1px; }
.c1 { width: 17px; }
.c2 { width: 111px; }
th { padding: 0; height: 20px; background: #464646; border: 1px solid #333; text-align: left; font-weight: 700; color: #fff; }
th div { display: flex; align-items: center; justify-content: space-between; padding: 0 7px 0 6px; height: 18px; font-size: 12px; }
th i { width: 6px; height: 2px; background: #fff; }
td { height: 19px; padding: 0; border-bottom: 1px solid #515151; line-height: 18px; overflow: hidden; white-space: nowrap; font-size: 11px; }
.ic { border-bottom: 0; }
.ic svg { margin-left: 1px; }
.nm { border-left: 1px solid #515151; border-right: 1px solid #515151; padding-left: 6px; }
.vl { border-right: 1px solid #515151; padding: 0 2px 2px; line-height: 16px; }
.vl.list { padding: 0 2px; line-height: 18px; }
.vl svg { display: inline-block; vertical-align: -1px; margin: 0 4px 0 1px; }
.vl.muted { color: #aeaeae; }
.foot { display: flex; gap: 9px; padding: 12px 0 0 22px; }
.sidetabs { width: 20px; padding-top: 3px; margin-left: -3px; }
.sidetabs button { width: 20px; height: 121px; background: #505050; border: 1px solid #2e2e2e; border-radius: 0 5px 5px 0; }
.sidetabs button.on { background: #5c5c5c; border-left-color: #5c5c5c; }
.on .vtext { color: #fff; }

.command { display: flex; height: 57px; border-top: 2px solid #5c5c5c; font: 12px/15px "DejaVu Sans Mono", "Liberation Mono", monospace; color: #000; }
.grip { width: 17px; background: linear-gradient(#535353, #535353) 5px 0 / 1px 100% no-repeat, repeating-linear-gradient(#2c2c2c 0 1px, transparent 1px 2px) 3px 5px / 4px 10px no-repeat, #535353; }
.console { flex: 1; display: flex; flex-direction: column; background: #fff; }
pre { margin: 0; padding-top: 1px; font: inherit; height: 38px; background: #c8c8c8; border-bottom: 1px solid #999; }
.prompt { flex: 1; display: flex; align-items: center; padding-top: 3px; }
.prompt input { flex: 1; outline: none; }

.bottom { height: 48px; border-top: 1px solid #555; }
.layouts { display: flex; height: 17px; padding-left: 9px; font-size: 11px; }
.lay { width: 65px; color: #b5b5b5; background: linear-gradient(#484848, #5a5a5a); clip-path: polygon(0 0, 5px 12%, 10px 80%, 14px 100%, calc(100% - 14px) 100%, calc(100% - 9px) 80%, calc(100% - 4px) 12%, 100% 0); }
.lay + .lay { width: 54px; margin-left: -3px; }
.lay.on { color: #fff; font-weight: 700; background: linear-gradient(#5c5c5c, #8a8a8a); }
.lay.plus { width: 24px; height: 16px; margin-left: 2px; clip-path: none; border-radius: 8px 3px 10px 4px; font-size: 15px; font-weight: 700; color: #ccc; background: #505050; }
.status { display: flex; justify-content: flex-end; gap: 1px; margin: 3px 1px 0 0; color: #fff; }
.grp { display: flex; align-items: center; height: 26px; background: #525252; border: 1px solid #7a7a7a; }
.coords { width: 213px; justify-content: flex-end; padding-right: 5px; font-size: 12px; }
.model { width: 55px; }
.st { width: 24px; height: 24px; }
.sd { width: 15px; height: 24px; }
.sub { display: flex; }
.sub + .sub { border-left: 1px solid #7a7a7a; }
.detail { width: 97px; gap: 4px; font-size: 11px; }
.tight { gap: 2px; padding: 0 2px; }
</style>
